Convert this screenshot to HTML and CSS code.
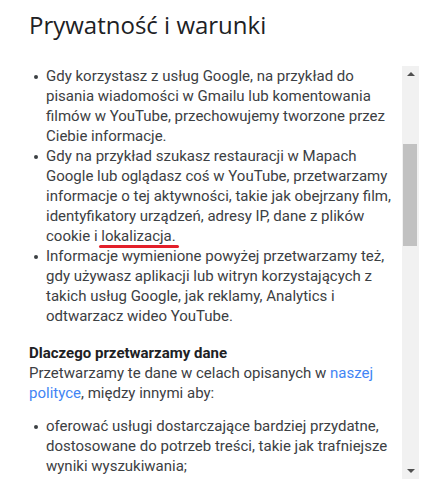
FILE: index.html
```html
<!DOCTYPE html>
<html lang="pl">
<head>
  <meta charset="UTF-8" />
  <meta name="viewport" content="width=device-width, initial-scale=1.0"/>
  <title>Prywatność i warunki</title>
  <link rel="stylesheet" href="styles.css">
</head>
<body>
  <div class="dialog">
    <h1>Prywatność i warunki</h1>

    <div class="scroller">
      <div class="content">
        <ul class="list">
          <li>Gdy korzystasz z usług Google, na przykład do<br>pisania wiadomości w Gmailu lub komentowania<br>filmów w YouTube, przechowujemy tworzone przez<br>Ciebie informacje.</li>
          <li>Gdy na przykład szukasz restauracji w Mapach<br>Google lub oglądasz coś w YouTube, przetwarzamy<br>informacje o tej aktywności, takie jak obejrzany film,<br>identyfikatory urządzeń, adresy IP, dane z plików<br>cookie i <span class="mark">lokalizacja.</span></li>
          <li>Informacje wymienione powyżej przetwarzamy też,<br>gdy używasz aplikacji lub witryn korzystających z<br>takich usług Google, jak reklamy, Analytics i<br>odtwarzacz wideo YouTube.</li>
        </ul>

        <h2>Dlaczego przetwarzamy dane</h2>
        <p>Przetwarzamy te dane w celach opisanych w <a href="#">naszej<br>polityce</a>, między innymi aby:</p>

        <ul class="list">
          <li>oferować usługi dostarczające bardziej przydatne,<br>dostosowane do potrzeb treści, takie jak trafniejsze<br>wyniki wyszukiwania;</li>
        </ul>
      </div>

      <div class="scrollbar">
        <div class="arrow up"></div>
        <div class="track">
          <div class="thumb"></div>
        </div>
        <div class="arrow down"></div>
      </div>
    </div>
  </div>
</body>
</html>
```

FILE: styles.css
```css
* {
  box-sizing: border-box;
  margin: 0;
  padding: 0;
}

body {
  background: #fff;
  font-family: Roboto, 'Noto Sans', sans-serif;
  color: #3c4043;
}

.dialog {
  padding: 8px 20px 0 29px;
}

h1 {
  font-family: 'Open Sans', Roboto, sans-serif;
  font-weight: 400;
  font-size: 24px;
  line-height: 34px;
  color: #202124;
  height: 58px;
}

.scroller {
  display: flex;
  height: 413px;
}

.content {
  flex: 1;
  overflow: hidden;
  padding-right: 2px;
  font-size: 15px;
  line-height: 20px;
}

.list {
  list-style: none;
  padding-left: 17px;
}

.list li {
  position: relative;
}

.list li::before {
  content: "";
  position: absolute;
  left: -12px;
  top: 9px;
  width: 4px;
  height: 4px;
  border-radius: 50%;
  background: #3c4043;
}

h2 {
  font-size: 15px;
  font-weight: 700;
  color: #202124;
  margin-top: 17px;
  line-height: 20px;
}

p {
  margin-bottom: 13px;
}

a {
  color: #4285f4;
  text-decoration: none;
}

.mark {
  position: relative;
}

.mark::after {
  content: "";
  position: absolute;
  left: -2px;
  right: -3px;
  bottom: -3px;
  height: 3px;
  border-radius: 2px;
  background: #e3202a;
}

.scrollbar {
  width: 17px;
  background: #f1f1f1;
  display: flex;
  flex-direction: column;
}

.arrow {
  height: 17px;
  position: relative;
}

.arrow::after {
  content: "";
  position: absolute;
  left: 5px;
  width: 0;
  height: 0;
  border-left: 4px solid transparent;
  border-right: 4px solid transparent;
}

.arrow.up::after {
  top: 6px;
  border-bottom: 4px solid #505050;
}

.arrow.down::after {
  bottom: 6px;
  border-top: 4px solid #505050;
}

.track {
  flex: 1;
  padding-top: 61px;
}

.thumb {
  height: 102px;
  margin: 0 2px 0 1px;
  background: #c1c1c1;
}
```
